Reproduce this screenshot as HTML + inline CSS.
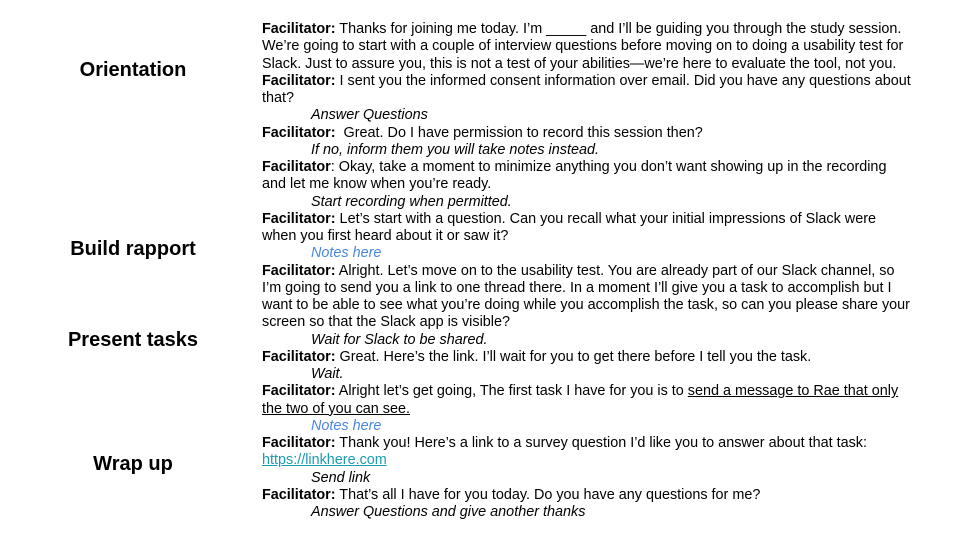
<!DOCTYPE html>
<html><head><meta charset="utf-8"><style>
body{margin:0;width:960px;height:540px;background:#fff;position:relative;overflow:hidden;font-family:"Liberation Sans",Arial,sans-serif;color:#000}
.h{position:absolute;width:266px;left:0;text-align:center;font-weight:bold;font-size:20px}
#t{position:absolute;left:262px;top:21px;font-size:14.4px;line-height:17.25px;white-space:nowrap}
.i{font-style:italic;padding-left:49px}
.n{color:#4a86e8}
a{color:#1a9cb0;text-decoration:underline}
u{text-decoration:underline}
</style></head><body>
<div class="h" style="top:59px">Orientation</div>
<div class="h" style="top:238px">Build rapport</div>
<div class="h" style="top:329px">Present tasks</div>
<div class="h" style="top:453px">Wrap up</div>
<div id="t">
<div><b>Facilitator:</b> Thanks for joining me today. I’m _____ and I’ll be guiding you through the study session.</div>
<div>We’re going to start with a couple of interview questions before moving on to doing a usability test for</div>
<div>Slack. Just to assure you, this is not a test of your abilities—we’re here to evaluate the tool, not you.</div>
<div><b>Facilitator:</b> I sent you the informed consent information over email. Did you have any questions about</div>
<div>that?</div>
<div class="i">Answer Questions</div>
<div><b>Facilitator:</b>&nbsp; Great. Do I have permission to record this session then?</div>
<div class="i">If no, inform them you will take notes instead.</div>
<div><b>Facilitator</b>: Okay, take a moment to minimize anything you don’t want showing up in the recording</div>
<div>and let me know when you’re ready.</div>
<div class="i">Start recording when permitted.</div>
<div><b>Facilitator:</b> Let’s start with a question. Can you recall what your initial impressions of Slack were</div>
<div>when you first heard about it or saw it?</div>
<div class="i n">Notes here</div>
<div><b>Facilitator:</b> Alright. Let’s move on to the usability test. You are already part of our Slack channel, so</div>
<div>I’m going to send you a link to one thread there. In a moment I’ll give you a task to accomplish but I</div>
<div>want to be able to see what you’re doing while you accomplish the task, so can you please share your</div>
<div>screen so that the Slack app is visible?</div>
<div class="i">Wait for Slack to be shared.</div>
<div><b>Facilitator:</b> Great. Here’s the link. I’ll wait for you to get there before I tell you the task.</div>
<div class="i">Wait.</div>
<div><b>Facilitator:</b> Alright let’s get going, The first task I have for you is to <u>send a message to Rae that only</u></div>
<div><u>the two of you can see.</u></div>
<div class="i n">Notes here</div>
<div><b>Facilitator:</b> Thank you! Here’s a link to a survey question I’d like you to answer about that task:</div>
<div><a>https://linkhere.com</a></div>
<div class="i">Send link</div>
<div><b>Facilitator:</b> That’s all I have for you today. Do you have any questions for me?</div>
<div class="i">Answer Questions and give another thanks</div>
</div>
</body></html>
